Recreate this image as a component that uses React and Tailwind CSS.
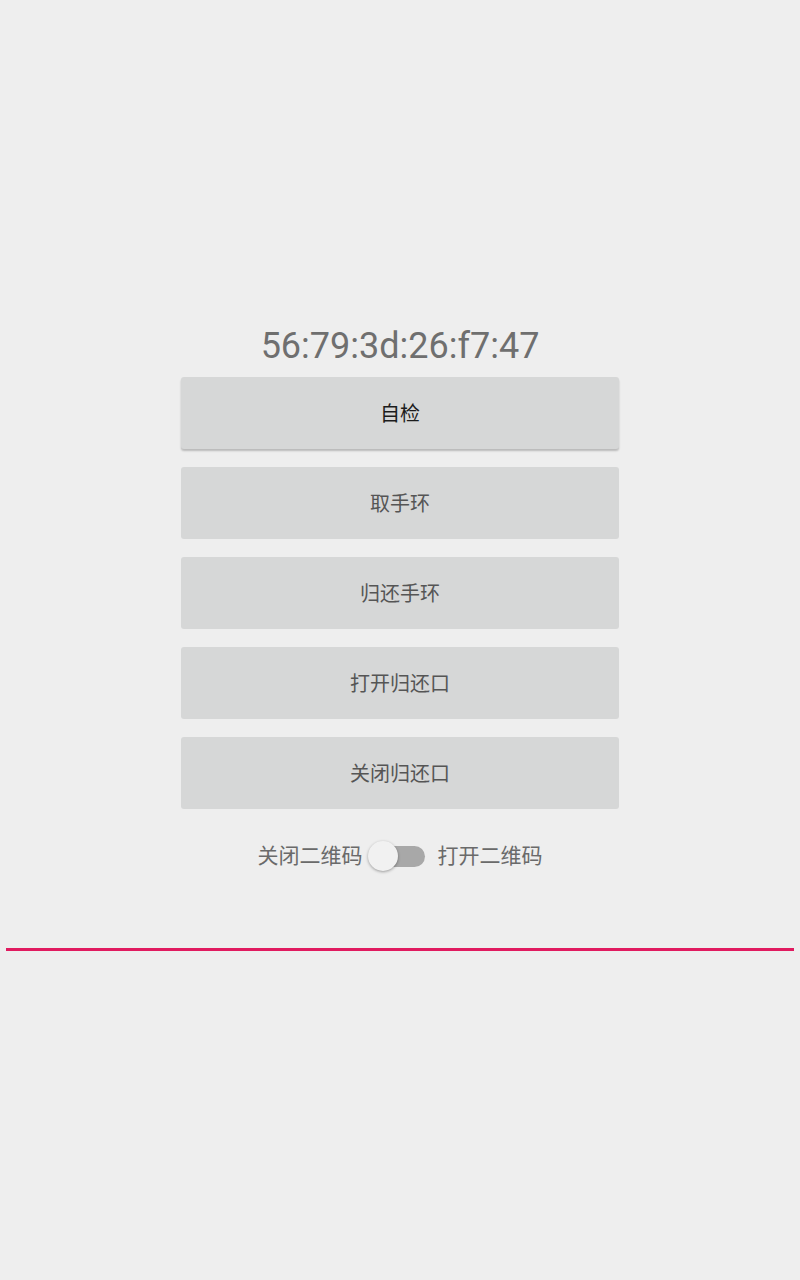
import React, { useState } from 'react'

const buttons = ['自检', '取手环', '归还手环', '打开归还口', '关闭归还口']

const font = { fontFamily: 'Roboto, "Noto Sans CJK SC", sans-serif' }

export default function App() {
  const [qrOn, setQrOn] = useState(false)

  return (
    <div className="min-h-[1280px] w-full bg-[#eeeeee] flex flex-col items-center pt-[325px]" style={font}>
      {/* device address */}
      <div className="text-[36px] leading-[42px] text-[#6f6f6f] mb-[10px]">56:79:3d:26:f7:47</div>

      {/* action buttons */}
      <div className="flex flex-col gap-[18px]">
        {buttons.map((label, i) => (
          <button
            key={label}
            className={`w-[438px] h-[72px] pt-[2px] rounded-[3px] bg-[#d6d7d7] text-[20px] ${
              i === 0 ? 'text-[#1c1c1c] shadow-[0_2px_2px_rgba(0,0,0,0.22)]' : 'text-[#555555]'
            }`}
          >
            {label}
          </button>
        ))}
      </div>

      {/* qr code switch */}
      <div className="mt-[24px] h-[48px] flex items-center text-[21px] text-[#6a6a6a]">
        <span>关闭二维码</span>
        <div className="relative w-[75px] h-[48px]" onClick={() => setQrOn(!qrOn)}>
          <div className="absolute left-[8px] top-[13px] w-[54px] h-[21px] rounded-full bg-[#a8a8a8]" />
          <div
            className={`absolute top-[8px] w-[30px] h-[30px] rounded-full bg-[#f1f1f1] shadow-[0_1px_3px_rgba(0,0,0,0.35)] ${
              qrOn ? 'left-[35px]' : 'left-[5px]'
            }`}
          />
        </div>
        <span>打开二维码</span>
      </div>

      {/* divider */}
      <div className="mt-[67px] self-stretch mx-[6px] h-[3px] bg-[#e01a5f]" />
    </div>
  )
}
